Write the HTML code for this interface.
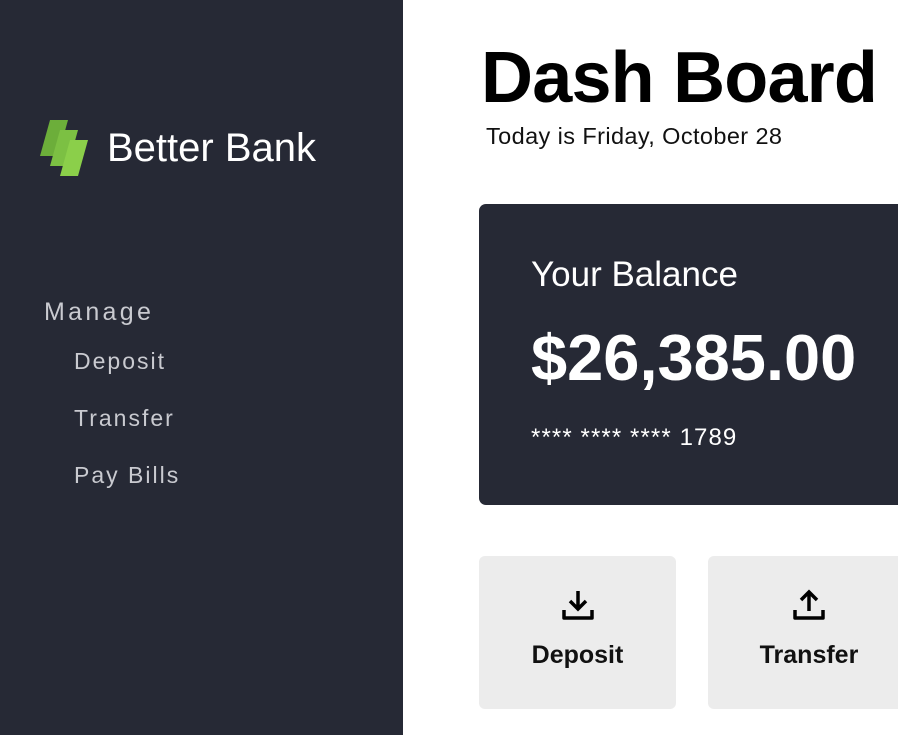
<!DOCTYPE html>
<html><head><style>
*{margin:0;padding:0;box-sizing:border-box}
body{width:898px;height:735px;overflow:hidden;background:#fff;font-family:"Liberation Sans",sans-serif;position:relative}
.side{position:absolute;left:0;top:0;width:403px;height:735px;background:#262935}
.brand{position:absolute;left:107px;top:126px;color:#fff;font-size:40px}
.m{position:absolute;color:#c9cad0;font-size:25px;letter-spacing:3.3px}
.s{position:absolute;color:#c9cad0;font-size:23px;letter-spacing:2px;left:74px}
h1{position:absolute;left:481px;top:37px;font-size:72px;font-weight:bold;color:#000;letter-spacing:-0.8px}
.date{position:absolute;left:486px;top:123px;font-size:23.5px;color:#111;letter-spacing:0.4px}
.card{position:absolute;left:479px;top:204px;width:440px;height:301px;background:#262935;border-radius:7px;color:#fff}
.btn{position:absolute;top:556px;width:197px;height:153px;background:#ececec;border-radius:6px;text-align:center}
.btn span{position:absolute;left:0;right:0;top:85px;font-size:25px;font-weight:bold;color:#111}
.btn svg{position:absolute;left:82px;top:32px}
</style></head><body>
<div class="side">
<svg style="position:absolute;left:38px;top:118px" width="54" height="60" viewBox="0 0 54 60">
<polygon points="12,2 30,2 20,38 2,38" fill="#6cae3a"/>
<polygon points="22,12 40,12 30,48 12,48" fill="#7cc043"/>
<polygon points="32,22 50,22 40,58 22,58" fill="#8bcf4a"/>
</svg>
<div class="brand">Better Bank</div>
<div class="m" style="left:44px;top:298px">Manage</div>
<div class="s" style="top:348px">Deposit</div>
<div class="s" style="top:405px">Transfer</div>
<div class="s" style="top:462px">Pay Bills</div>
</div>
<h1>Dash Board</h1>
<div class="date">Today is Friday, October 28</div>
<div class="card">
<div style="position:absolute;left:52px;top:51px;font-size:35px">Your Balance</div>
<div style="position:absolute;left:52px;top:116px;font-size:65px;font-weight:bold">$26,385.00</div>
<div style="position:absolute;left:52px;top:220px;font-size:24px;letter-spacing:1.1px">**** **** **** 1789</div>
</div>
<div class="btn" style="left:479px">
<svg width="34" height="34" viewBox="0 0 34 34" fill="none" stroke="#000" stroke-width="3.5"><path d="M17 3V20M9 13L17 21L25 13"/><path d="M3 22V30H31V22" stroke-linejoin="round"/></svg>
<span>Deposit</span></div>
<div class="btn" style="left:708px;width:220px">
<svg width="34" height="34" viewBox="0 0 34 34" fill="none" stroke="#000" stroke-width="3.5" style="left:84px"><path d="M17 23V5M9 12L17 4L25 12"/><path d="M3 22V30H31V22" stroke-linejoin="round"/></svg>
<span style="right:18px">Transfer</span></div>
</body></html>
